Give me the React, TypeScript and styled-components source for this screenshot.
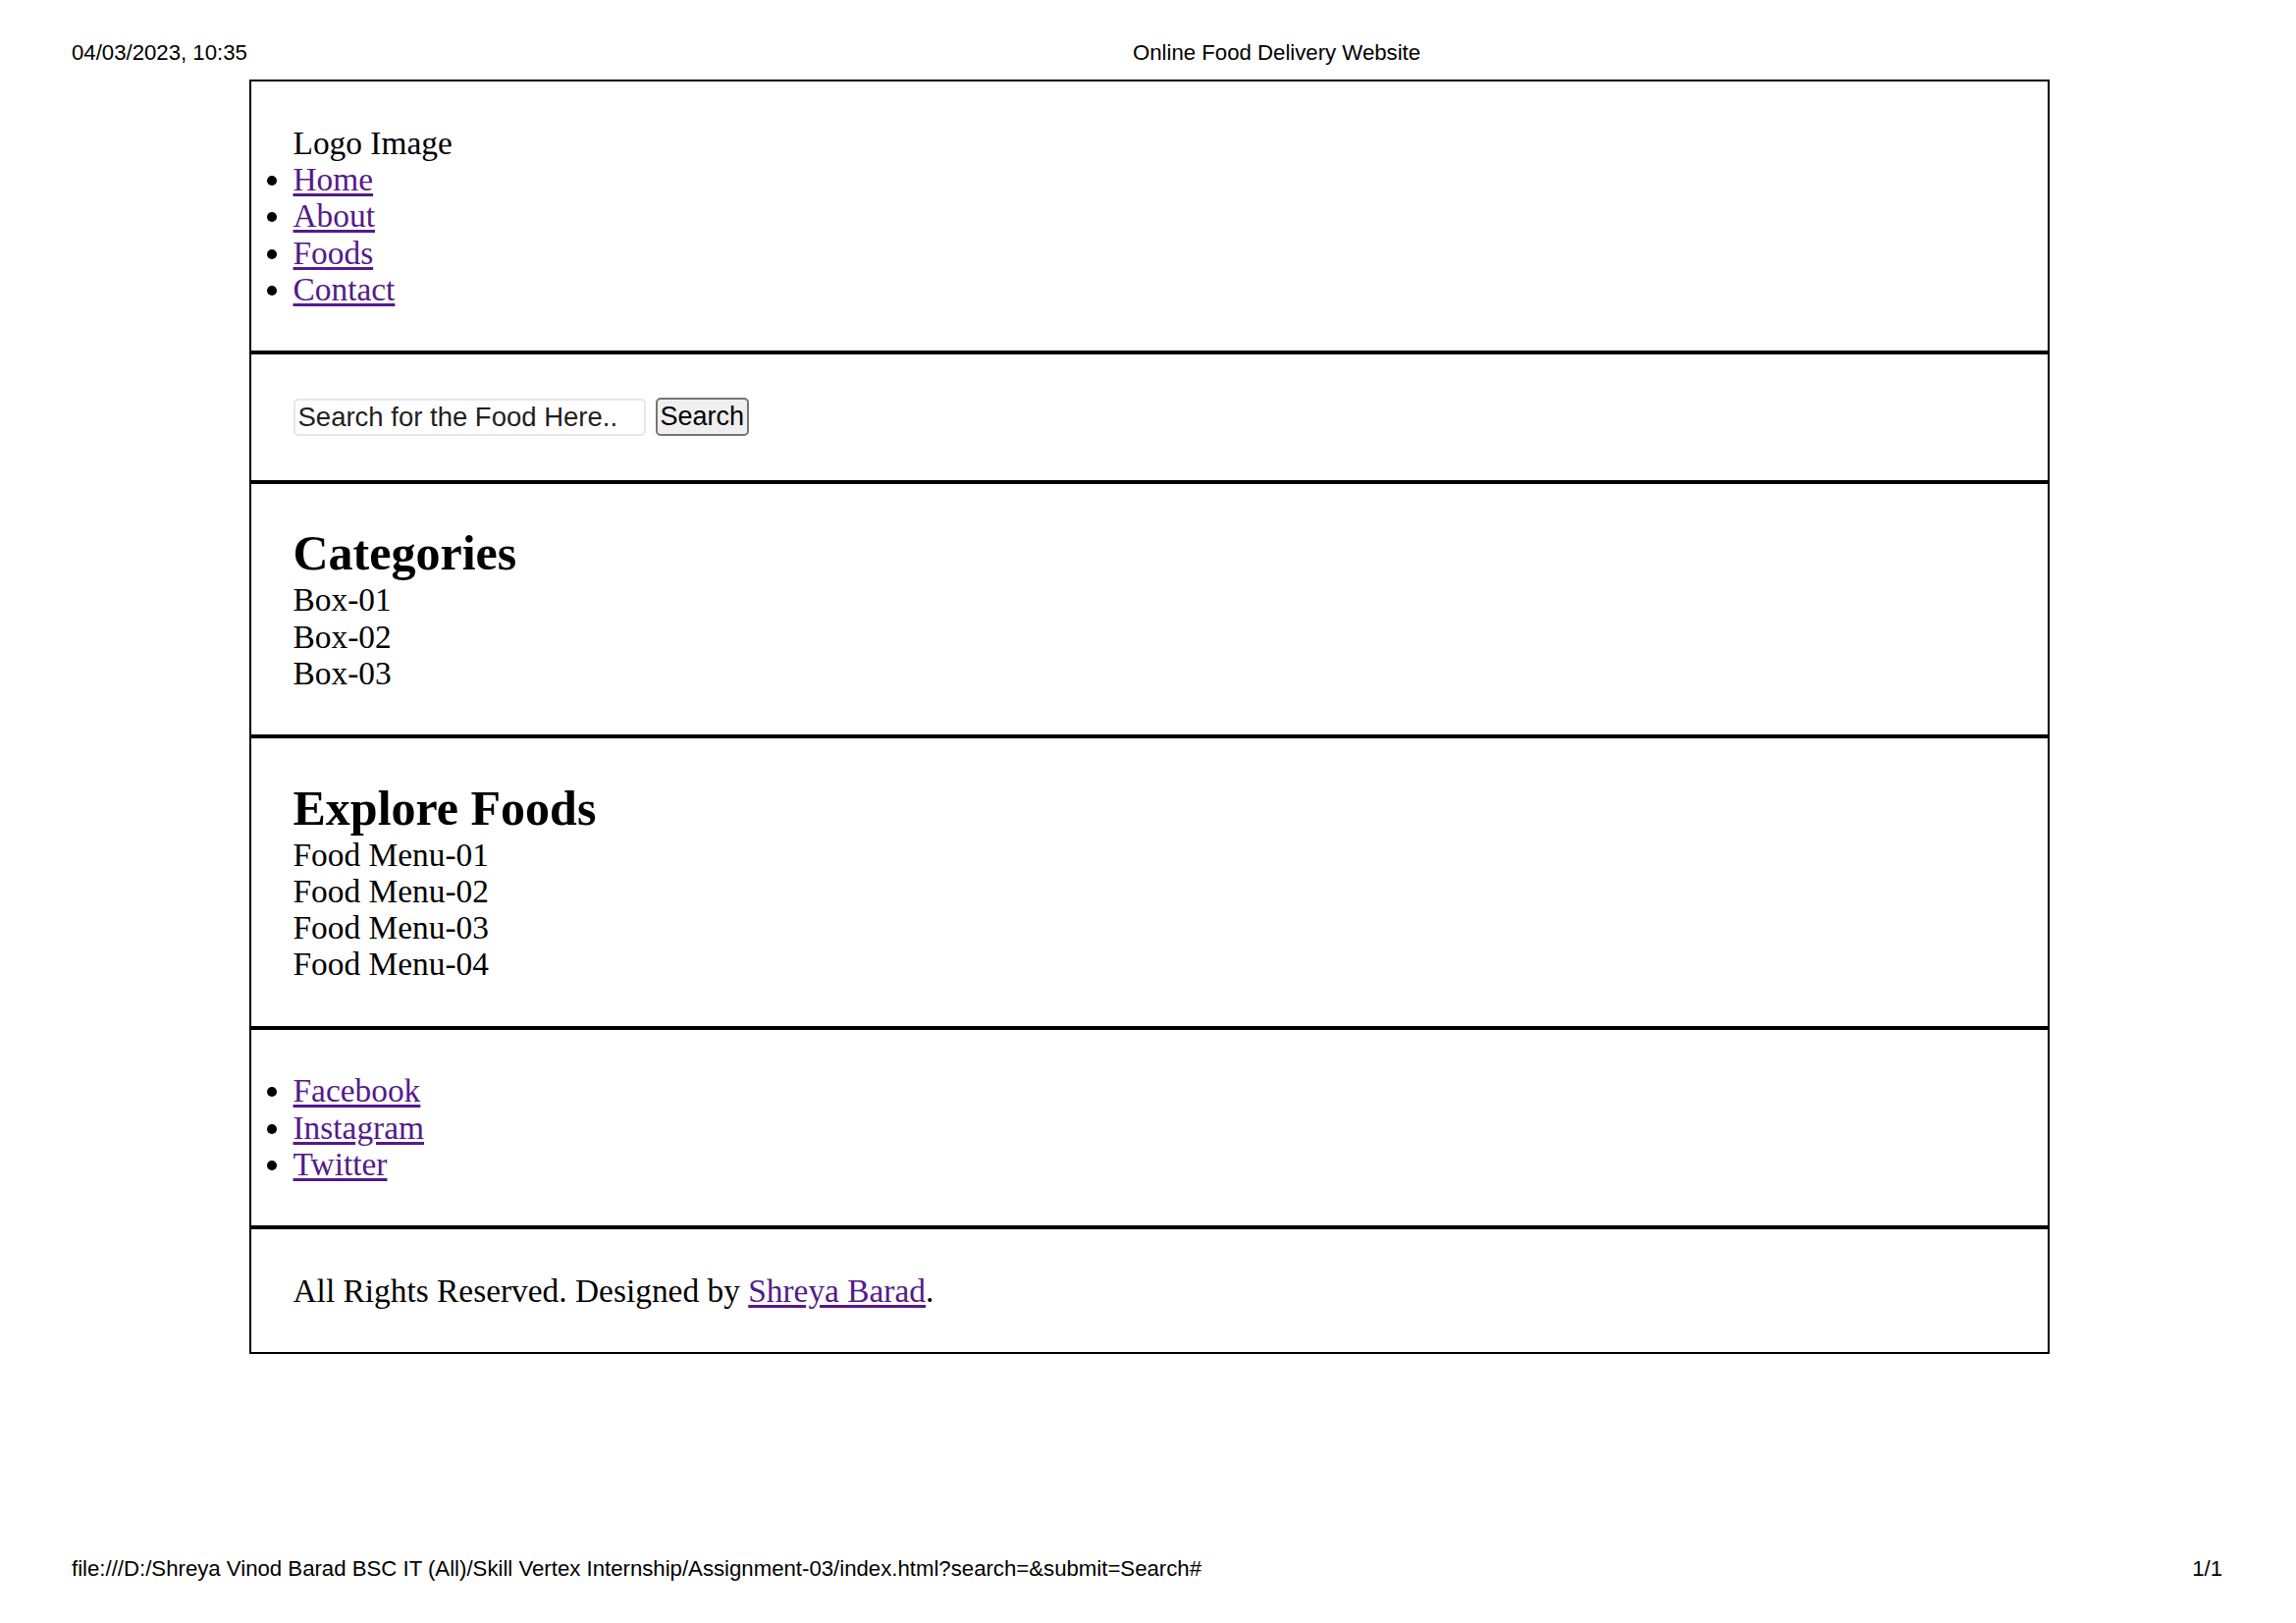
import styled, { createGlobalStyle } from 'styled-components';

const GlobalStyle = createGlobalStyle`
    html, body {
        margin: 0;
        padding: 0;
        background: #ffffff;
    }
`;

const NAV_LINKS = ['Home', 'About', 'Foods', 'Contact'];
const CATEGORIES = ['Box-01', 'Box-02', 'Box-03'];
const FOOD_MENUS = ['Food Menu-01', 'Food Menu-02', 'Food Menu-03', 'Food Menu-04'];
const SOCIAL_LINKS = ['Facebook', 'Instagram', 'Twitter'];

const App = () => {
    return (
        <Page>
            <GlobalStyle />
            <PrintHeader>
                <PrintText>04/03/2023, 10:35</PrintText>
                <PrintText>Online Food Delivery Website</PrintText>
            </PrintHeader>

            <Site>
                <Section>
                    <div>Logo Image</div>
                    <LinkList>
                        {NAV_LINKS.map(label => (
                            <li key={label}><Link href="#">{label}</Link></li>
                        ))}
                    </LinkList>
                </Section>

                <Section>
                    <SearchForm onSubmit={e => e.preventDefault()}>
                        <SearchInput type="text" name="search" placeholder="Search for the Food Here.." />
                        <SearchButton type="submit" name="submit">Search</SearchButton>
                    </SearchForm>
                </Section>

                <Section>
                    <Heading>Categories</Heading>
                    {CATEGORIES.map(box => (
                        <div key={box}>{box}</div>
                    ))}
                </Section>

                <Section>
                    <Heading>Explore Foods</Heading>
                    {FOOD_MENUS.map(menu => (
                        <div key={menu}>{menu}</div>
                    ))}
                </Section>

                <Section>
                    <LinkList>
                        {SOCIAL_LINKS.map(label => (
                            <li key={label}><Link href="#">{label}</Link></li>
                        ))}
                    </LinkList>
                </Section>

                <Section>
                    All Rights Reserved. Designed by <Link href="#">Shreya Barad</Link>.
                </Section>
            </Site>

            <PrintFooter>
                <PrintText>file:///D:/Shreya Vinod Barad BSC IT (All)/Skill Vertex Internship/Assignment-03/index.html?search=&amp;submit=Search#</PrintText>
                <PrintText>1/1</PrintText>
            </PrintFooter>
        </Page>
    );
}

const Page = styled.div`
    display: flex;
    flex-direction: column;
    width: 2339px;
    min-height: 1653px;
    box-sizing: border-box;
    background: #ffffff;
`;

const PrintHeader = styled.div`
    display: grid;
    grid-template-columns: 1081px auto;
    padding: 41px 73px 0;
`;

const PrintFooter = styled.div`
    display: flex;
    justify-content: space-between;
    margin-top: auto;
    padding: 0 75px 42px 73px;
`;

const PrintText = styled.div`
    font-family: "Liberation Sans", Arial, sans-serif;
    font-size: 22.2px;
    color: #000;
`;

const Site = styled.div`
    width: 1834px;
    margin: 14px 0 0 254px;
    font-family: "Liberation Serif", "Times New Roman", serif;
    font-size: 33.4px;
    line-height: 37.3px;
    color: #000;
`;

const Section = styled.div`
    border: 2px solid #000;
    padding: 43.8px 42.5px;
`;

const LinkList = styled.ul`
    margin: 0;
    padding: 0;
    list-style: disc outside;
`;

const Link = styled.a`
    color: #551a8b;
    text-decoration: underline;
    text-underline-offset: 3px;
`;

const Heading = styled.h2`
    margin: 0;
    font-size: 50px;
    line-height: 55.8px;
    font-weight: bold;
`;

const SearchForm = styled.form`
    display: flex;
    align-items: center;
    height: 40px;
`;

const SearchInput = styled.input`
    box-sizing: border-box;
    width: 359px;
    height: 38px;
    padding: 0 3px;
    border: 2px solid #e6e6e6;
    border-radius: 5px;
    font-family: "Liberation Sans", Arial, sans-serif;
    font-size: 27.5px;
    color: #1a1a1a;
    background: #fff;
    outline: none;

    &::placeholder {
        color: #1f1f1f;
        opacity: 1;
    }
`;

const SearchButton = styled.button`
    box-sizing: border-box;
    height: 39px;
    margin-left: 10px;
    padding: 0 3px;
    border: 2px solid #767676;
    border-radius: 5px;
    background: #efefef;
    font-family: "Liberation Sans", Arial, sans-serif;
    font-size: 27px;
    color: #000;
`;

export default App;
